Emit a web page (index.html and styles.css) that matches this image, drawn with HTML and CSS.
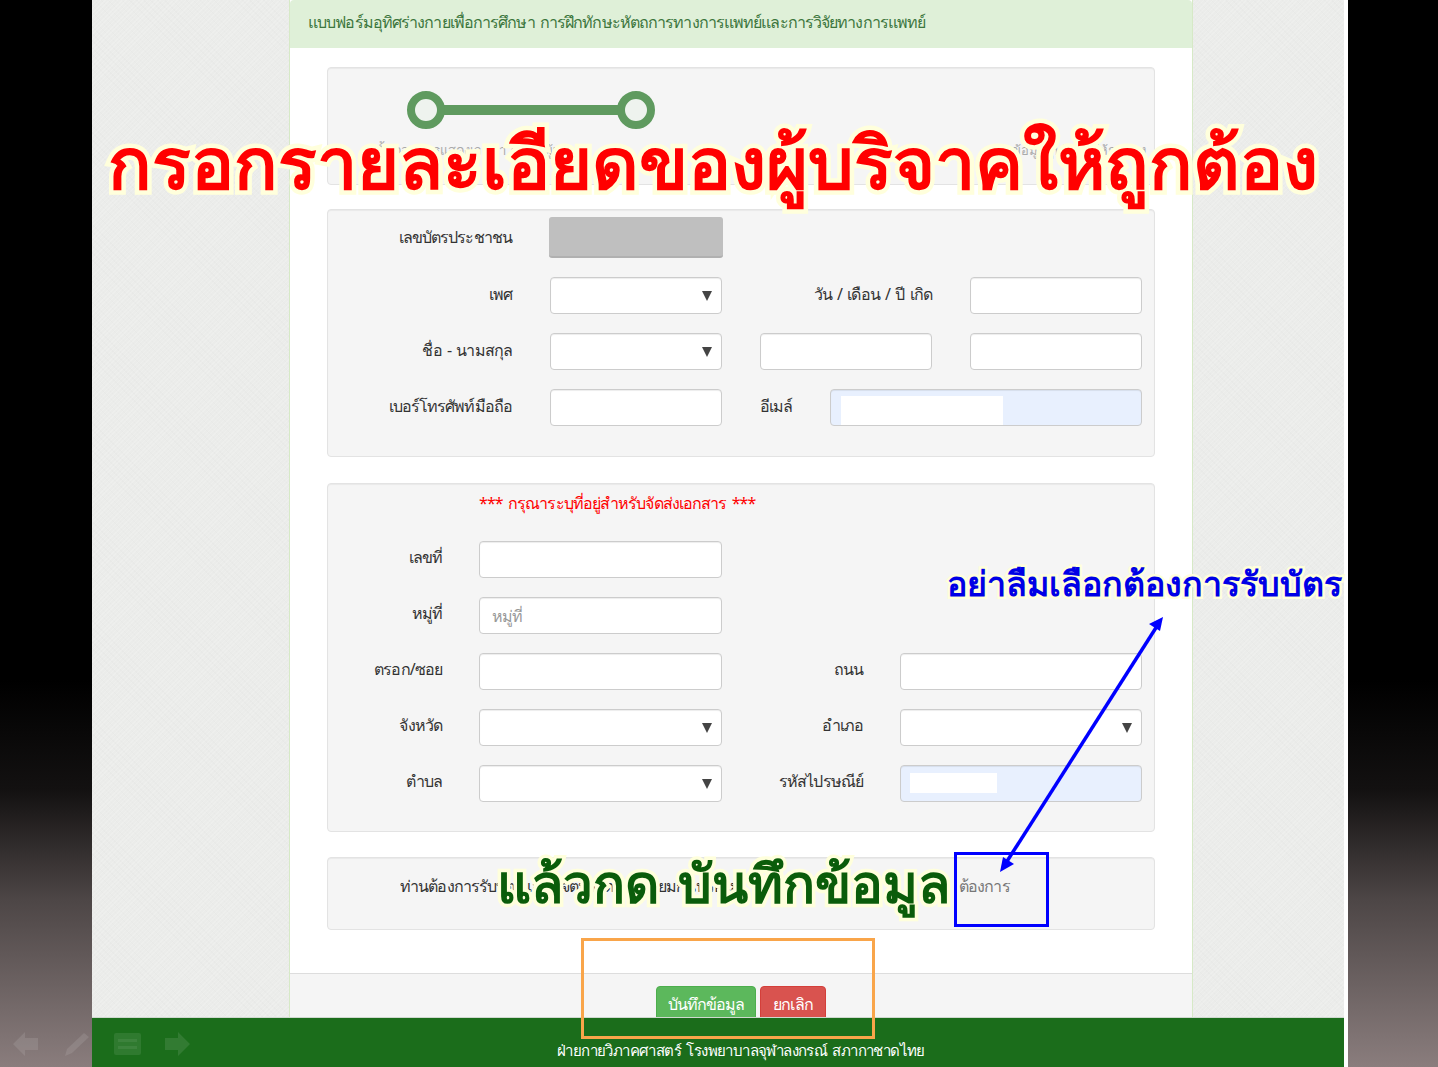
FILE: index.html
```html
<!DOCTYPE html>
<html lang="th">
<head>
<meta charset="utf-8">
<title>แบบฟอร์มอุทิศร่างกาย</title>
<link rel="stylesheet" href="styles.css">
</head>
<body>
<div class="stage">
  <div class="slide">
    <div class="slide-body">
      <main class="panel">
        <header class="panel-head">แบบฟอร์มอุทิศร่างกายเพื่อการศึกษา การฝึกทักษะหัตถการทางการแพทย์และการวิจัยทางการแพทย์</header>
        <div class="panel-main">
          <section class="well well-steps">
            <svg class="steps" width="270" height="50" viewBox="0 0 270 50" aria-hidden="true">
              <line x1="30" y1="25" x2="240" y2="25" stroke="#5f9a5f" stroke-width="10"/>
              <circle cx="30" cy="25" r="15" fill="#eef3ee" stroke="#5f9a5f" stroke-width="8"/>
              <circle cx="240" cy="25" r="15" fill="#eef3ee" stroke="#5f9a5f" stroke-width="8"/>
            </svg>
            <div class="step-labels">
              <span>ขั้นตอนการแสดงเจตนา ข้อมูลผู้บริจาค</span>
              <span>ข้อมูลผู้บริจาคให้ถูกต้อง</span>
            </div>
          </section>

          <section class="well grid-person">
            <label class="lbl">เลขบัตรประชาชน</label>
            <div class="id-mask"></div>

            <label class="lbl">เพศ</label>
            <div class="select"><select></select></div>
            <label class="lbl">วัน / เดือน / ปี เกิด</label>
            <input class="field" type="text">

            <label class="lbl">ชื่อ - นามสกุล</label>
            <div class="select"><select></select></div>
            <input class="field" type="text">
            <input class="field" type="text">

            <label class="lbl">เบอร์โทรศัพท์มือถือ</label>
            <input class="field" type="text">
            <div class="email-row">
              <label class="lbl">อีเมล์</label>
              <input class="field autofill autofill-email" type="text">
            </div>
          </section>

          <section class="well grid-address">
            <p class="notice">*** กรุณาระบุที่อยู่สำหรับจัดส่งเอกสาร ***</p>

            <label class="lbl">เลขที่</label>
            <input class="field" type="text">
            <div class="spacer"></div>

            <label class="lbl">หมู่ที่</label>
            <input class="field" type="text" placeholder="หมู่ที่">
            <div class="spacer"></div>

            <label class="lbl">ตรอก/ซอย</label>
            <input class="field" type="text">
            <label class="lbl">ถนน</label>
            <input class="field" type="text">

            <label class="lbl">จังหวัด</label>
            <div class="select"><select></select></div>
            <label class="lbl">อำเภอ</label>
            <div class="select"><select></select></div>

            <label class="lbl">ตำบล</label>
            <div class="select"><select></select></div>
            <label class="lbl">รหัสไปรษณีย์</label>
            <input class="field autofill autofill-zip" type="text">
          </section>

          <section class="well card-row">
            <span class="card-q">ท่านต้องการรับบัตรแสดงเจตนาโดยเท่าเทียมกันหรือไม่</span>
            <span class="card-a">ต้องการ</span>
          </section>
        </div>
        <footer class="panel-foot">
          <button class="btn btn-save" type="button">บันทึกข้อมูล</button>
          <button class="btn btn-cancel" type="button">ยกเลิก</button>
        </footer>
      </main>
    </div>
    <div class="site-foot">ฝ่ายกายวิภาคศาสตร์ โรงพยาบาลจุฬาลงกรณ์ สภากาชาดไทย</div>
  </div>

  <div class="note note-title">กรอกรายละเอียดของผู้บริจาคให้ถูกต้อง</div>
  <div class="note note-card">อย่าลืมเลือกต้องการรับบัตร</div>
  <div class="note note-save">แล้วกด บันทึกข้อมูล</div>
  <div class="mark mark-blue"></div>
  <div class="mark mark-orange"></div>
  <svg class="arrow" width="180" height="270" viewBox="0 0 180 270" aria-hidden="true">
    <line x1="164" y1="13" x2="9" y2="256" stroke="#0000ff" stroke-width="3.5"/>
    <polygon points="168,7 165,21 154,14" fill="#0000ff"/>
    <polygon points="5,262 8,247 19,254" fill="#0000ff"/>
  </svg>
  <svg class="nav-icons" width="192" height="32" viewBox="0 0 192 32" aria-hidden="true">
    <polygon points="1,16 13,4 13,10 26,10 26,22 13,22 13,28" fill="#ffffff" fill-opacity=".1"/>
    <polygon points="53,28 55,21 72,5 77,9 60,25" fill="#ffffff" fill-opacity=".1"/>
    <rect x="102" y="5" width="27" height="22" rx="2" fill="#ffffff" fill-opacity=".09"/>
    <rect x="106" y="11" width="19" height="3" fill="#ffffff" fill-opacity=".07"/>
    <rect x="106" y="18" width="19" height="3" fill="#ffffff" fill-opacity=".07"/>
    <polygon points="178,16 166,4 166,10 153,10 153,22 166,22 166,28" fill="#ffffff" fill-opacity=".1"/>
  </svg>
</div>
</body>
</html>
```

FILE: styles.css
```css
* { box-sizing: border-box; }
html, body { margin: 0; height: 100%; }
body {
  font-family: "Noto Sans", "DejaVu Sans", sans-serif;
  font-size: 16px;
  letter-spacing: -0.9px;
  word-spacing: 2px;
  color: #333;
  background: #000;
}
.stage {
  position: relative;
  width: 1438px;
  height: 1067px;
  overflow: hidden;
  padding-left: 92px;
  background: linear-gradient(to bottom, #000 0, #000 680px, #131111 790px, #4d4646 900px, #8a7d7d 1067px);
}
.slide {
  width: 1256px;
  height: 1067px;
  display: flex;
  flex-direction: column;
  border-right: 4px solid #fff;
}
.slide-body {
  flex: 1;
  min-height: 0;
  display: flex;
  padding-left: 197px;
  background-color: #ebecea;
  background-image:
    repeating-linear-gradient(135deg, rgba(255,255,255,.16) 0 1px, transparent 1px 3px),
    repeating-linear-gradient(45deg, rgba(0,0,0,.012) 0 1px, transparent 1px 5px);
}
.panel {
  width: 904px;
  height: 1017px;
  display: flex;
  flex-direction: column;
  background: #fff;
  border: 1px solid #d6e9c6;
  border-width: 0 1px;
}
.panel-head {
  height: 48px;
  flex: none;
  padding: 10px 18px;
  line-height: 25px;
  color: #3c763d;
  background: #dff0d8;
  border-radius: 4px 4px 0 0;
  white-space: nowrap;
}
.panel-main {
  flex: 1;
  padding: 19px 37px 0;
  display: flex;
  flex-direction: column;
}
.well {
  width: 828px;
  background: #f5f5f5;
  border: 1px solid #e3e3e3;
  border-radius: 4px;
  box-shadow: inset 0 1px 1px rgba(0,0,0,.05);
}
.well-steps {
  height: 118px;
  margin-bottom: 24px;
  padding: 17px 0 0 68px;
}
.steps { display: block; }
.step-labels {
  margin: 5px 0 0 -21px;
  display: flex;
  gap: 420px;
  font-size: 13px;
  letter-spacing: 0;
  line-height: 20px;
  color: #aaa;
  white-space: nowrap;
}
.grid-person {
  height: 248px;
  margin-bottom: 26px;
  padding-top: 8px;
  display: grid;
  grid-template-columns: 184px 172px 172px 172px;
  grid-template-rows: 40px 37px 37px 37px;
  column-gap: 38px;
  row-gap: 19px;
  align-content: start;
}
.grid-address {
  height: 349px;
  margin-bottom: 25px;
  padding-top: 5px;
  display: grid;
  grid-template-columns: 114px 243px 104px 242px;
  grid-template-rows: 33px repeat(5, 37px);
  column-gap: 37px;
  row-gap: 19px;
  align-content: start;
}
.grid-address .lbl { margin-top: -6px; }
.notice {
  grid-column: 1 / -1;
  margin: 0 0 0 151px;
  color: #f00;
  line-height: 29px;
}
.lbl {
  display: block;
  align-self: center;
  text-align: right;
  line-height: 24px;
  margin-top: -3px;
  color: #333;
  white-space: nowrap;
}
.spacer { grid-column: span 2; }
.field, .select select {
  display: block;
  width: 100%;
  height: 37px;
  padding: 0 12px;
  font: inherit;
  letter-spacing: inherit;
  background: #fff;
  border: 1px solid #ccc;
  border-radius: 4px;
  box-shadow: inset 0 1px 1px rgba(0,0,0,.075);
}
.field::placeholder { color: #999; opacity: 1; }
.select { position: relative; height: 37px; }
.select select { appearance: none; -webkit-appearance: none; }
.select::after {
  content: "";
  position: absolute;
  right: 10px;
  top: 14px;
  border: 5px solid transparent;
  border-top: 10px solid #444;
  border-bottom: 0;
}
.id-mask {
  grid-column: span 3;
  width: 174px;
  height: 41px;
  margin: -1px 0 0 -1px;
  background: #bfbfbf;
  border-radius: 3px;
  border-bottom: 2px solid #b0b0b0;
}
.email-row {
  grid-column: span 2;
  display: flex;
  gap: 37px;
}
.email-row .lbl { flex: none; width: 33px; text-align: left; }
.email-row .field { flex: 1; min-width: 0; }
.autofill {
  background-color: #e8f0fe;
  background-image: linear-gradient(#fff, #fff);
  background-repeat: no-repeat;
}
.autofill-email { background-size: 162px 30px; background-position: 10px 6px; }
.autofill-zip { background-size: 87px 20px; background-position: 9px 7px; }
.card-row {
  height: 73px;
  padding: 13px 0 0 72px;
  display: flex;
  align-items: flex-start;
  line-height: 30px;
  white-space: nowrap;
}
.card-q { width: 559px; overflow: hidden; }
.card-a { color: #777; }
.panel-foot {
  flex: none;
  height: 44px;
  display: flex;
  justify-content: center;
  align-items: flex-start;
  gap: 4px;
  padding: 12px 0 0 0;
  background: #f5f5f5;
  border-top: 1px solid #ddd;
  overflow: hidden;
}
.btn {
  height: 36px;
  padding: 0 6px;
  font: inherit;
  letter-spacing: inherit;
  color: #fff;
  border: 1px solid;
  border-radius: 4px;
  white-space: nowrap;
}
.btn-save { width: 100px; background: #5cb85c; border-color: #4cae4c; }
.btn-cancel { width: 66px; background: #d9534f; border-color: #d43f3a; }
.site-foot {
  flex: none;
  height: 50px;
  padding: 20px 0 0 46px;
  text-align: center;
  font-size: 15px;
  letter-spacing: -0.6px;
  line-height: 24px;
  color: #fff;
  background: #1b6d1b;
  border-top: 1px solid #cfd8cf;
  white-space: nowrap;
}
.note {
  position: absolute;
  white-space: nowrap;
  font-weight: 700;
  letter-spacing: 0;
  word-spacing: 0;
  paint-order: stroke fill;
  -webkit-text-stroke-color: #ffffdc;
}
.note-title {
  left: 108px;
  top: 111px;
  font-size: 72px;
  line-height: 100px;
  color: #f00;
  -webkit-text-stroke-width: 9px;
}
.note-card {
  left: 947px;
  top: 559px;
  font-size: 34px;
  line-height: 48px;
  color: #0000e6;
  -webkit-text-stroke-width: 5px;
}
.note-save {
  left: 497px;
  top: 845px;
  font-size: 53px;
  word-spacing: 5px;
  line-height: 76px;
  color: #0a5c0a;
  -webkit-text-stroke-width: 7px;
}
.mark { position: absolute; border: 3px solid; }
.mark-blue { left: 954px; top: 852px; width: 95px; height: 75px; border-color: #0000ff; }
.mark-orange { left: 581px; top: 938px; width: 294px; height: 101px; border-color: #f9a54a; }
.arrow { position: absolute; left: 995px; top: 610px; }
.nav-icons { position: absolute; left: 12px; top: 1028px; }
```
